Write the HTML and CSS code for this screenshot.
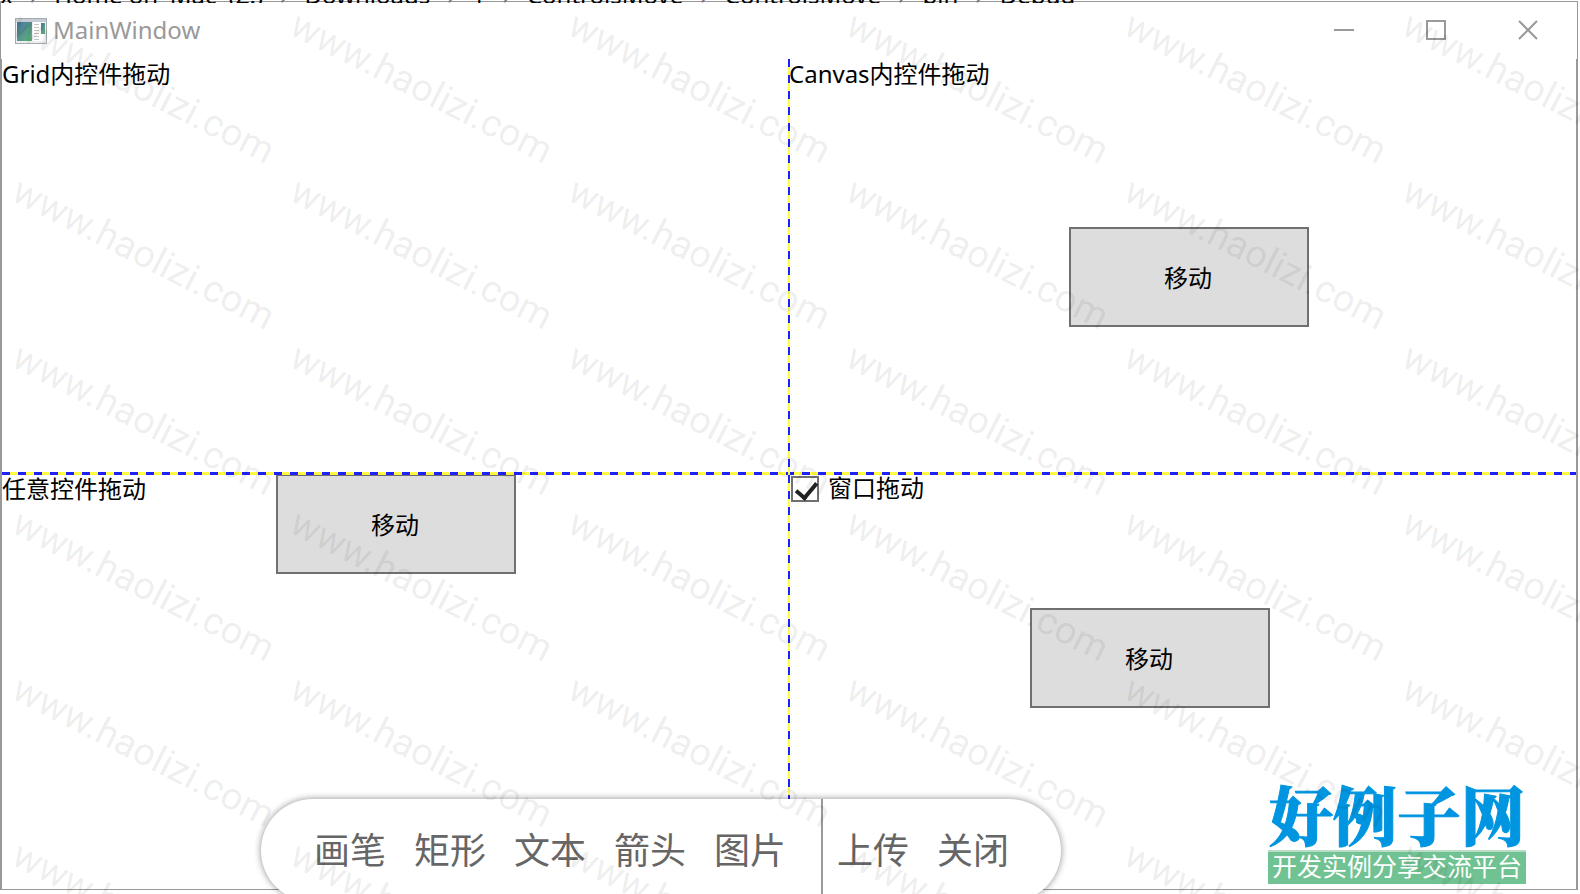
FILE: index.html
```html
<!DOCTYPE html>
<html lang="zh-CN">
<head>
	<meta charset="UTF-8">
	<title>MainWindow</title>
	<link rel="stylesheet" href="styles.css">
</head>
<body>

	<!-- 窗口后面露出的地址栏 -->
	<div class="address">
		<span>x</span><i>›</i><span>Home on 'Mac' (Z:)</span><i>›</i><span>Downloads</span><i>›</i><span>1</span><i>›</i><span>ControlsMove</span><i>›</i><span>ControlsMove</span><i>›</i><span>bin</span><i>›</i><span>Debug</span>
	</div>

	<div class="window">
		<header class="titlebar">
			<svg class="app-icon" width="32" height="26" viewBox="0 0 32 26">
				<defs>
					<linearGradient id="pic" x1="0" y1="0" x2="1" y2="1">
						<stop offset="0" stop-color="#4674a0"/>
						<stop offset="1" stop-color="#63b577"/>
					</linearGradient>
				</defs>
				<rect x="0.5" y="0.5" width="31" height="25" fill="#eceef0" stroke="#a5aab0"/>
				<rect x="1" y="1" width="30" height="3" fill="#c6ccd3"/>
				<rect x="2" y="4" width="15" height="19" fill="url(#pic)"/>
				<rect x="18" y="4" width="12" height="19" fill="#fff"/>
				<path d="M19 6.500h5M19 9.500h5M19 12.500h5M19 15.500h5M19 18.500h5M19 21.500h5" stroke="#c4c4c4"/>
				<rect x="26" y="5" width="4" height="11" fill="url(#pic)"/>
			</svg>
			<h1>MainWindow</h1>
			<div class="win-btns">
				<button type="button" aria-label="最小化"><svg width="20" height="20"><path d="M0 10h20"/></svg></button>
				<button type="button" aria-label="最大化"><svg width="20" height="20"><path d="M1 1h18v18h-18z"/></svg></button>
				<button type="button" aria-label="关闭窗口"><svg width="20" height="20"><path d="M1 1l18 18M19 1l-18 18"/></svg></button>
			</div>
		</header>

		<main class="grid">
			<section class="cell">
				<p>Grid内控件拖动</p>
			</section>
			<section class="cell">
				<p>Canvas内控件拖动</p>
				<button type="button" class="move move-canvas">移动</button>
			</section>
			<section class="cell">
				<p>任意控件拖动</p>
				<button type="button" class="move move-any">移动</button>
			</section>
			<section class="cell">
				<label class="check"><input type="checkbox" checked>窗口拖动</label>
				<button type="button" class="move move-window">移动</button>
			</section>
			<div class="line-h"></div>
			<div class="line-v"></div>
		</main>
	</div>

	<nav class="toolbar">
		<div class="tools">
			<button type="button">画笔</button>
			<button type="button">矩形</button>
			<button type="button">文本</button>
			<button type="button">箭头</button>
			<button type="button">图片</button>
		</div>
		<div class="actions">
			<button type="button">上传</button>
			<button type="button">关闭</button>
		</div>
	</nav>

	<div class="logo">
		<strong>好例子网</strong>
		<span>开发实例分享交流平台</span>
	</div>

	<!-- 水印 -->
	<div class="watermark">
		<span>www.haolizi.com</span><span>www.haolizi.com</span><span>www.haolizi.com</span><span>www.haolizi.com</span><span>www.haolizi.com</span><span>www.haolizi.com</span>
		<span>www.haolizi.com</span><span>www.haolizi.com</span><span>www.haolizi.com</span><span>www.haolizi.com</span><span>www.haolizi.com</span><span>www.haolizi.com</span>
		<span>www.haolizi.com</span><span>www.haolizi.com</span><span>www.haolizi.com</span><span>www.haolizi.com</span><span>www.haolizi.com</span><span>www.haolizi.com</span>
		<span>www.haolizi.com</span><span>www.haolizi.com</span><span>www.haolizi.com</span><span>www.haolizi.com</span><span>www.haolizi.com</span><span>www.haolizi.com</span>
		<span>www.haolizi.com</span><span>www.haolizi.com</span><span>www.haolizi.com</span><span>www.haolizi.com</span><span>www.haolizi.com</span><span>www.haolizi.com</span>
		<span>www.haolizi.com</span><span>www.haolizi.com</span><span>www.haolizi.com</span><span>www.haolizi.com</span><span>www.haolizi.com</span><span>www.haolizi.com</span>
	</div>

</body>
</html>
```
FILE: styles.css
```css
* {
	padding: 0;
	margin: 0;
	box-sizing: border-box;
}

body {
	height: 100vh;
	padding: 1px 2px 4px 0;
	position: relative;
	overflow: hidden;
	background-color: #fff;
	font-family: "Noto Sans", "Noto Sans CJK SC", sans-serif;
	font-size: 24px;
	color: #000;
}

button {
	font-family: inherit;
	border: none;
	background: none;
}

.address {
	position: absolute;
	top: 0;
	left: 0;
	right: 0;
	height: 3px;
	display: flex;
	align-items: flex-end;
	gap: 17px;
	overflow: hidden;
	white-space: nowrap;
	line-height: 16px;
}

.address i {
	font-style: normal;
	color: #777;
}

.window {
	height: 100%;
	display: flex;
	flex-direction: column;
	border: 1px solid #999;
}

.titlebar {
	height: 57px;
	padding-left: 14px;
	display: flex;
	align-items: center;
	color: #999;
}

.titlebar h1 {
	margin-left: 6px;
	padding-bottom: 2px;
	flex: 1;
	font-size: 24px;
	font-weight: normal;
}

.win-btns {
	display: flex;
	padding: 0 3px 2px 0;
}

.win-btns button {
	width: 92px;
	height: 54px;
	display: flex;
	align-items: center;
	justify-content: center;
}

.win-btns svg {
	fill: none;
	stroke: #999;
	stroke-width: 2;
}

.grid {
	flex: 1;
	display: grid;
	grid-template-columns: 1fr 1fr;
	grid-template-rows: 1fr 1fr;
	position: relative;
	border: solid #999;
	border-width: 0 1px;
}

.cell {
	position: relative;
	line-height: 30px;
}

/* 可以拖动的按钮 */
.move {
	position: absolute;
	width: 240px;
	height: 100px;
	padding: 0 2px 2px 0;
	border: 2px solid #707070;
	background-color: #ddd;
	font-size: 24px;
	color: #000;
}

.move-canvas {
	left: 280px;
	top: 168px;
}

.move-any {
	left: 274px;
	top: 0;
}

.move-window {
	left: 241px;
	top: 134px;
}

.check {
	display: flex;
	align-items: flex-start;
	gap: 9px;
	padding-left: 2px;
	line-height: 28px;
}

.check input {
	appearance: none;
	width: 28px;
	height: 26px;
	margin-top: 2px;
	border: 2px solid #707070;
	background-color: #fff;
	position: relative;
}

.check input:checked::after {
	content: "";
	position: absolute;
	left: 7px;
	top: 0;
	width: 9px;
	height: 17px;
	border: solid #212121;
	border-width: 0 4px 4px 0;
	transform: rotate(40deg);
}

.line-h {
	position: absolute;
	left: 0;
	right: 0;
	top: 50%;
	height: 3px;
	margin-top: -2px;
	background: repeating-linear-gradient(to right, #2020ff 0 8px, #ffff40 8px 16px);
}

.line-v {
	position: absolute;
	top: 0;
	bottom: 0;
	left: 50%;
	width: 2px;
	margin-left: -1px;
	background: repeating-linear-gradient(to bottom, #2020ff 0 8px, #ffff40 8px 16px);
}

.toolbar {
	position: absolute;
	left: 261px;
	bottom: -8px;
	height: 103px;
	display: flex;
	border-radius: 52px;
	background-color: #fff;
	box-shadow: 0 0 7px rgba(0, 0, 0, 0.45);
}

.tools,
.actions {
	display: flex;
	gap: 28px;
}

.tools {
	padding: 0 35px 0 53px;
	border-right: 2px solid #999;
}

.actions {
	padding: 0 52px 0 14px;
}

.toolbar button {
	padding-bottom: 5px;
	font-size: 36px;
	color: #666;
}

.logo {
	position: absolute;
	right: 54px;
	bottom: 10px;
	width: 258px;
	display: flex;
	flex-direction: column;
	text-align: center;
	white-space: nowrap;
}

.logo strong {
	padding-bottom: 4px;
	font-family: "Noto Serif CJK SC", "Noto Sans CJK SC", serif;
	font-size: 64px;
	font-weight: 900;
	line-height: 68px;
	color: #0095e0;
	-webkit-text-stroke: 1px #0095e0;
}

.logo span {
	padding-bottom: 3px;
	font-size: 25px;
	line-height: 29px;
	border-top: 2px solid #b9dcc6;
	background-color: #70c292;
	color: #fff;
}

.watermark {
	position: absolute;
	left: 0;
	top: 0;
	display: grid;
	grid-template-columns: repeat(6, 278px);
	grid-auto-rows: 166px;
	pointer-events: none;
}

.watermark span {
	padding: 5px 0 0 24px;
	font-family: Roboto, sans-serif;
	font-size: 38px;
	line-height: 38px;
	white-space: nowrap;
	color: rgba(0, 0, 0, 0.08);
	transform: rotate(27deg);
	transform-origin: 24px 5px;
}
```
